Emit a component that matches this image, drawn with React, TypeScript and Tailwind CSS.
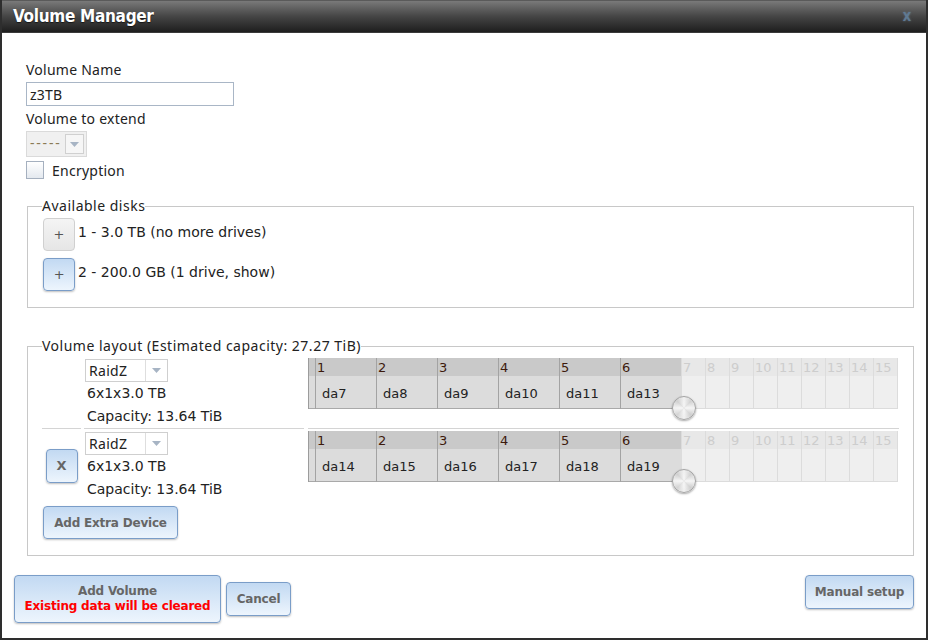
import React from "react";

const sans = "font-['Noto_Sans',sans-serif]";
const ver = "font-['DejaVu_Sans',Verdana,sans-serif]";
const blueBtn =
  "border border-[#7a9dc8] rounded-[4px] bg-linear-to-b from-[#c2d9f2] to-[#edf5fd] shadow-[0_1px_2px_rgba(0,0,0,0.25)] text-[#666] font-bold tracking-[-0.2px] " +
  ver;

function Arrow() {
  return (
    <svg width="9" height="5" viewBox="0 0 9 5">
      <path d="M0 0 L9 0 L4.5 5 Z" fill="#a7b4c4" />
    </svg>
  );
}

function RaidSelect() {
  return (
    <div className="mt-[1px] ml-[1px] flex h-[23px] w-[83px] border border-[#cfcfcf] bg-white">
      <div className={`flex-1 pl-[3px] text-[14px] leading-[21px] tracking-[0.3px] text-[#222] ${sans}`}>RaidZ</div>
      <div className="flex w-[22px] items-center justify-center border-l border-[#dedede]">
        <Arrow />
      </div>
    </div>
  );
}

function DiskGrid({ disks }: { disks: string[] }) {
  const inactive = [7, 8, 9, 10, 11, 12, 13, 14, 15];
  return (
    <div className={`relative flex w-[591px] text-[13px] ${ver}`}>
      <div className="flex w-[7px] flex-col border-l border-[#9c9c9c]">
        <div className="h-[18px] bg-[#c9c9c9]" />
        <div className="h-[33px] border-b border-[#a9a9a9] bg-[#dcdcdc]" />
      </div>
      {disks.map((d, i) => (
        <div key={d} className="flex w-[61px] flex-col border-l border-[#a3a3a3]">
          <div className="h-[18px] bg-[#c9c9c9] pl-[1px] leading-[20px] text-[#3d1a0c]">{i + 1}</div>
          <div className="h-[33px] border-b border-[#a9a9a9] bg-[#dcdcdc] pl-[6px] leading-[36px] text-[#222]">
            {d}
          </div>
        </div>
      ))}
      {inactive.map((n, i) => (
        <div
          key={n}
          className={`flex flex-col border-l border-[#dcdcdc] ${i === 8 ? "w-[25px] border-r" : "w-[24px]"}`}
        >
          <div className="h-[18px] bg-[#e8e8e8] pl-[1px] leading-[20px] text-[#cdcdcd]">{n}</div>
          <div className="h-[33px] border-b border-[#dcdcdc] bg-[#efefef]" />
        </div>
      ))}
      <div className="absolute left-[364px] top-[38px] h-[24px] w-[24px] rounded-full border border-[#a4a4a4] bg-[conic-gradient(#f2f2f2,#d2d2d2,#f4f4f4,#cfcfcf,#f2f2f2,#d4d4d4,#f4f4f4,#d0d0d0,#f2f2f2)] shadow-[0_1px_2px_rgba(0,0,0,0.35)]">
        <div className="absolute inset-[2px] rounded-full bg-[radial-gradient(circle,rgba(255,255,255,0.6)_0%,rgba(255,255,255,0)_70%)]" />
      </div>
    </div>
  );
}

function VdevRow({ disks, removable, bordered }: { disks: string[]; removable?: boolean; bordered?: boolean }) {
  const b = bordered ? "border-b border-[#d4d4d4]" : "";
  return (
    <div className="flex gap-[3px]">
      <div className={`flex w-[39px] items-center justify-center ${b}`}>
        {removable && (
          <div className={`flex h-[34px] w-[32px] items-center justify-center text-[13px] ${blueBtn}`}>X</div>
        )}
      </div>
      <div className={`w-[220px] ${b}`}>
        <RaidSelect />
        <div className={`pl-[3px] text-[14px] leading-[23px] text-[#222] ${ver}`}>6x1x3.0 TB</div>
        <div className={`pl-[3px] text-[14px] leading-[23px] text-[#222] ${ver}`}>Capacity: 13.64 TiB</div>
      </div>
      <div className={`ml-[1px] w-[591px] ${b}`}>
        <DiskGrid disks={disks} />
      </div>
    </div>
  );
}

export default function App() {
  return (
    <div className="flex h-[640px] w-[928px] flex-col overflow-hidden border-2 border-t-0 border-[#2e2e2e] bg-white">
      <div className="flex h-[33px] shrink-0 items-center justify-between border-t border-b border-[#3a3a3a] border-t-[#5a5a5a] bg-linear-to-b from-[#7a7a7a] via-[#454545] to-[#1e1e1e] pl-[11px] pr-[15px]">
        <span className="font-['DejaVu_Sans_Condensed','DejaVu_Sans',sans-serif] font-stretch-condensed text-[17px] font-bold tracking-[-0.3px] text-white [text-shadow:0_1px_1px_rgba(0,0,0,0.6)]">
          Volume Manager
        </span>
        <span className="font-['DejaVu_Sans_Condensed','DejaVu_Sans',sans-serif] font-stretch-condensed text-[12px] font-bold text-[#5f7a93] [text-shadow:0_0_2px_rgba(120,150,180,0.6)]">
          X
        </span>
      </div>

      <div className="flex flex-1 flex-col px-[12px]">
        <div className={`pl-[12px] pt-[28px] text-[14px] tracking-[0.25px] text-[#222] ${sans}`}>
          <div className="leading-[17px]">Volume Name</div>
          <div className="mt-[4px] flex h-[24px] w-[208px] items-center border border-[#a9b6c6] bg-white pl-[3px] leading-[17px]">
            z3TB
          </div>
          <div className="mt-[4px] leading-[17px]">Volume to extend</div>
          <div className="mt-[4px] flex h-[26px] w-[61px] border border-[#dadada] bg-[#f0f0f0]">
            <div className="flex-1 pl-[3px] text-[14px] leading-[22px] tracking-[1.8px] text-[#8a7a55]">-----</div>
            <div className="m-[2px] flex w-[19px] items-center justify-center border border-[#d0d0d0] bg-[#f6f6f6]">
              <Arrow />
            </div>
          </div>
          <div className="mt-[4px] flex h-[18px] items-center">
            <div className="h-[18px] w-[18px] border border-[#a5b0bf] bg-linear-to-b from-white to-[#e4e9ef]" />
            <span className="ml-[8px] leading-[17px]">Encryption</span>
          </div>
        </div>

        <fieldset className="ml-[13px] mt-[17px] w-[887px] border border-[#c8c8c8] pb-[16px] pl-[14px] pr-[14px]">
          <legend className={`text-[14px] leading-[20px] tracking-[0.5px] text-[#222] ${sans}`}>Available disks</legend>
          <div className={`mt-[2px] text-[14px] text-[#222] ${ver}`}>
            <div className="flex items-center">
              <div className="ml-[1px] flex h-[33px] w-[32px] items-center justify-center rounded-[4px] border border-[#d0d0d0] bg-linear-to-b from-[#f4f4f4] to-[#e6e6e6] text-[13px] text-[#555]">
                +
              </div>
              <span className="mb-[4px] ml-[3px]">1 - 3.0 TB (no more drives)</span>
            </div>
            <div className="mt-[7px] flex items-center">
              <div className={`ml-[1px] flex h-[33px] w-[32px] items-center justify-center text-[13px] !font-normal !text-[#555] ${blueBtn}`}>
                +
              </div>
              <span className="mb-[4px] ml-[3px]">2 - 200.0 GB (1 drive, show)</span>
            </div>
          </div>
        </fieldset>

        <fieldset className="ml-[13px] mt-[28px] w-[887px] border border-[#c8c8c8] pb-[16px] pl-[14px] pr-[14px]">
          <legend className={`text-[14px] leading-[20px] tracking-[0.5px] text-[#222] ${sans}`}>
            Volume layout (Estimated capacity: 27.27 TiB)
          </legend>
          <div className="pt-[2px]">
            <VdevRow disks={["da7", "da8", "da9", "da10", "da11", "da13"]} bordered />
            <div className="mt-[2px]">
              <VdevRow disks={["da14", "da15", "da16", "da17", "da18", "da19"]} removable />
            </div>
            <div className={`ml-[1px] mt-[5px] flex h-[33px] w-[135px] items-center justify-center text-[12px] ${blueBtn}`}>
              Add Extra Device
            </div>
          </div>
        </fieldset>

        <div className="mt-[19px] flex items-start justify-between">
          <div className="flex items-center gap-[5px]">
            <div className={`flex h-[48px] w-[207px] flex-col items-center justify-center text-[12px] leading-[15px] ${blueBtn}`}>
              <span>Add Volume</span>
              <span className="text-[#ff0000]">Existing data will be cleared</span>
            </div>
            <div className={`flex h-[34px] w-[65px] items-center justify-center text-[12px] ${blueBtn}`}>Cancel</div>
          </div>
          <div className={`flex h-[34px] w-[109px] items-center justify-center text-[12px] ${blueBtn}`}>
            Manual setup
          </div>
        </div>
      </div>
    </div>
  );
}
